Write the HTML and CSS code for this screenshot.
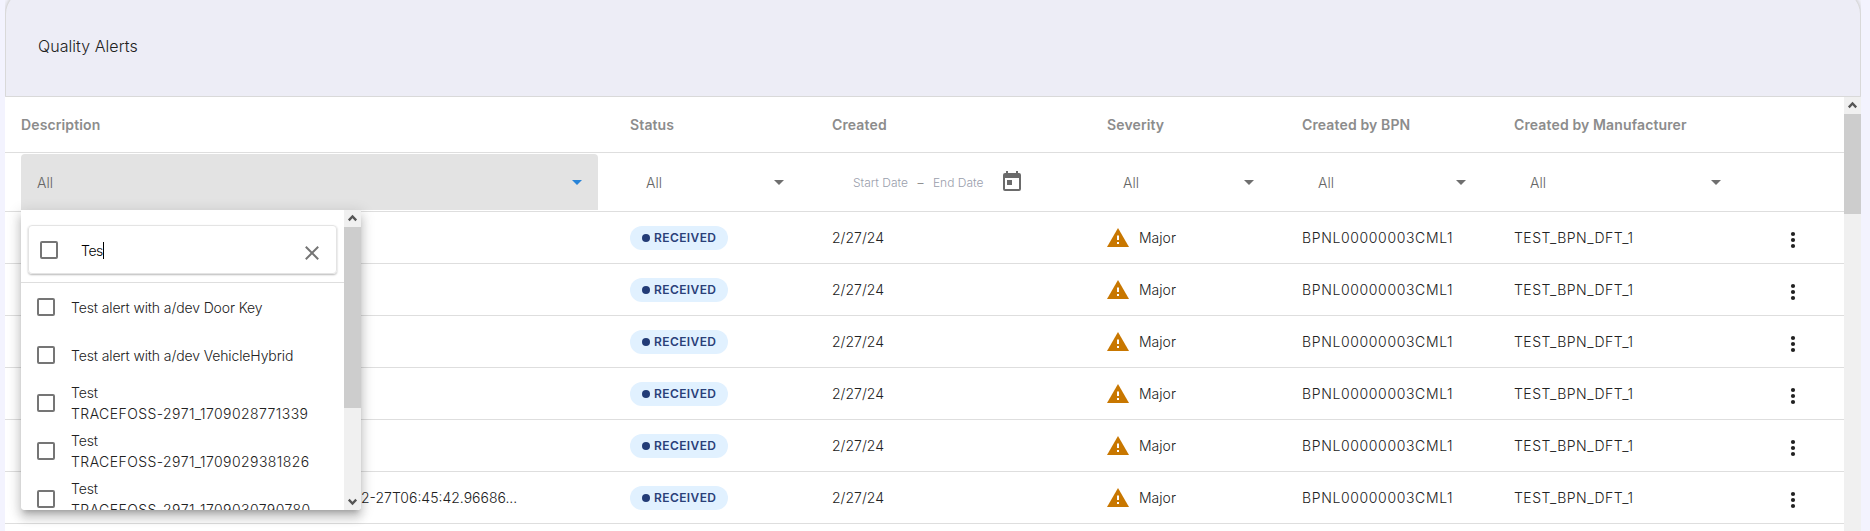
FILE: index.html
```html
<!DOCTYPE html>
<html lang="en">
<head>
<meta charset="utf-8">
<title>Quality Alerts</title>
<link rel="stylesheet" href="styles.css">
</head>
<body>
<svg width="0" height="0" class="defs">
  <symbol id="warn" viewBox="0 0 22 19"><path d="M11 0 22 19H0Z" fill="#c87700"/><path d="M10 7.5h2v4.5h-2zM10 14h2v2h-2z" fill="#fff"/></symbol>
  <symbol id="dots" viewBox="0 0 6 18"><circle cx="3" cy="3" r="2.1"/><circle cx="3" cy="9" r="2.1"/><circle cx="3" cy="15" r="2.1"/></symbol>
  <symbol id="up" viewBox="0 0 17 17"><path d="M4.8 10.4 8.5 6.5l3.7 3.9" fill="none" stroke="#555" stroke-width="2.3"/></symbol>
</svg>
<div class="page">
  <main class="card">
    <header class="card-header"><h1>Quality Alerts</h1></header>
    <div class="body">
      <div class="table">
        <div class="row head">
          <div>Description</div><div>Status</div><div>Created</div><div>Severity</div><div>Created by BPN</div><div>Created by Manufacturer</div><div></div>
        </div>
        <div class="row filters">
          <div class="anchor">
            <div class="select active"><span>All</span><i class="arrow"></i></div>
            <div class="panel">
              <div class="panel-list">
                <div class="search-wrap">
                  <div class="search">
                    <span class="box"></span><span class="query">Tes</span><span class="caret"></span>
                    <svg class="clear" width="14" height="14" viewBox="0 0 14 14"><path d="M.8.8 13.2 13.2M13.2.8.8 13.2" stroke="#757575" stroke-width="2"/></svg>
                  </div>
                </div>
                <div class="option"><span class="box"></span><span class="label">Test alert with a/dev Door Key</span></div>
                <div class="option"><span class="box"></span><span class="label">Test alert with a/dev VehicleHybrid</span></div>
                <div class="option"><span class="box"></span><span class="label">Test<br><b>TRACEFOSS-2971_1709028771339</b></span></div>
                <div class="option"><span class="box"></span><span class="label">Test<br><b>TRACEFOSS-2971_1709029381826</b></span></div>
                <div class="option"><span class="box"></span><span class="label">Test<br><b>TRACEFOSS-2971_1709030790780</b></span></div>
              </div>
              <div class="scroll"><svg class="btn"><use href="#up"/></svg><div class="thumb thumb-panel"></div><svg class="btn down"><use href="#up"/></svg></div>
            </div>
          </div>
          <div><div class="select"><span>All</span><i class="arrow"></i></div></div>
          <div><div class="dates"><span>Start Date</span><span class="dash">–</span><span>End Date</span>
            <svg width="18" height="20" viewBox="0 0 18 20"><path d="M3 0h2v2h8V0h2v2h1a2 2 0 0 1 2 2v14a2 2 0 0 1-2 2H2a2 2 0 0 1-2-2V4a2 2 0 0 1 2-2h1ZM2 7v11h14V7ZM4 9h5v5H4Z" fill="#6b6b6b" fill-rule="evenodd"/></svg></div></div>
          <div><div class="select"><span>All</span><i class="arrow"></i></div></div>
          <div><div class="select"><span>All</span><i class="arrow"></i></div></div>
          <div><div class="select"><span>All</span><i class="arrow"></i></div></div>
          <div></div>
        </div>
        <div class="row"><div></div><div><span class="chip">RECEIVED</span></div><div>2/27/24</div><div class="sev"><svg><use href="#warn"/></svg>Major</div><div class="bpn">BPNL00000003CML1</div><div class="man">TEST_BPN_DFT_1</div><div class="menu"><svg><use href="#dots"/></svg></div></div>
        <div class="row"><div></div><div><span class="chip">RECEIVED</span></div><div>2/27/24</div><div class="sev"><svg><use href="#warn"/></svg>Major</div><div class="bpn">BPNL00000003CML1</div><div class="man">TEST_BPN_DFT_1</div><div class="menu"><svg><use href="#dots"/></svg></div></div>
        <div class="row"><div></div><div><span class="chip">RECEIVED</span></div><div>2/27/24</div><div class="sev"><svg><use href="#warn"/></svg>Major</div><div class="bpn">BPNL00000003CML1</div><div class="man">TEST_BPN_DFT_1</div><div class="menu"><svg><use href="#dots"/></svg></div></div>
        <div class="row"><div></div><div><span class="chip">RECEIVED</span></div><div>2/27/24</div><div class="sev"><svg><use href="#warn"/></svg>Major</div><div class="bpn">BPNL00000003CML1</div><div class="man">TEST_BPN_DFT_1</div><div class="menu"><svg><use href="#dots"/></svg></div></div>
        <div class="row"><div></div><div><span class="chip">RECEIVED</span></div><div>2/27/24</div><div class="sev"><svg><use href="#warn"/></svg>Major</div><div class="bpn">BPNL00000003CML1</div><div class="man">TEST_BPN_DFT_1</div><div class="menu"><svg><use href="#dots"/></svg></div></div>
        <div class="row"><div class="desc">2-27T06:45:42.96686...</div><div><span class="chip">RECEIVED</span></div><div>2/27/24</div><div class="sev"><svg><use href="#warn"/></svg>Major</div><div class="bpn">BPNL00000003CML1</div><div class="man">TEST_BPN_DFT_1</div><div class="menu"><svg><use href="#dots"/></svg></div></div>
      </div>
      <div class="scroll"><svg class="btn"><use href="#up"/></svg><div class="thumb thumb-page"></div></div>
    </div>
  </main>
</div>
</body>
</html>
```
FILE: styles.css
```css
* { box-sizing: border-box; }
body {
  margin: 0;
  background: #f3f3fe;
  color: #212121;
  font: 300 14px/21px Inter, sans-serif;
}
.defs { position: absolute; }
.page { height: 531px; padding: 0 9px 0 5px; overflow: hidden; }
.card { height: 531px; display: flex; flex-direction: column; background: #f3f3fa; }
.card-header {
  height: 107px;
  flex: none;
  margin-top: -10px;
  padding: 4px 0 0 32px;
  display: flex;
  align-items: center;
  background: #ededf6;
  border: 1px solid #d9d9d9;
  border-radius: 24px 24px 0 0;
  box-shadow: 0 0 4px rgba(0, 0, 0, .18);
  clip-path: inset(0);
}
h1 { margin: 0; font-size: 16px; font-weight: 300; line-height: 24px; letter-spacing: .05px; }

.body { display: flex; flex: 1; min-height: 0; background: #fff; }
.table { flex: 1; }
.row {
  display: grid;
  grid-template-columns: 609px 202px 275px 195px 212px 255px 91px;
  height: 52px;
  border-bottom: 1px solid #dedede;
}
.row > div { display: flex; align-items: center; padding: 0 16px; white-space: nowrap; }
.row.head { height: 56px; color: #8c8c8c; font-weight: 600; letter-spacing: .13px; }
.row.filters { height: 59px; }

.anchor { position: relative; }
.select {
  flex: 1;
  height: 56px;
  padding: 0 16px;
  display: flex;
  align-items: center;
  justify-content: space-between;
  border-radius: 4px 4px 0 0;
  color: #666;
}
.select.active { background: #e3e3e3; }
.arrow { border: 5px solid transparent; border-top-color: #6f6f6f; border-bottom: 0; margin-top: 0; }
.active .arrow { border-top-color: #2884d8; }

.dates { display: flex; align-items: center; padding-left: 21px; font-size: 12px; color: #9a9eac; }
.dates .dash { width: 25px; text-align: center; color: #777; }
.dates svg { margin: -3px 0 0 20px; }

.chip {
  display: flex;
  align-items: center;
  width: 98px;
  height: 24px;
  padding-left: 12px;
  border-radius: 12px;
  background: #e1f1ff;
  color: #2a4079;
  font-size: 12px;
  font-weight: 600;
  letter-spacing: .4px;
}
.chip::before { content: ""; width: 8px; height: 8px; margin-right: 4px; border-radius: 50%; background: #233c77; }
.sev svg { width: 22px; height: 19px; margin-right: 10px; }
.bpn { letter-spacing: .64px; }
.man { letter-spacing: .47px; }
.row > .desc { padding-left: 356px; }
.row > .menu { padding: 4px 0 0 36.5px; }
.menu svg { width: 6px; height: 18px; fill: #212121; }

.panel {
  position: absolute;
  z-index: 2;
  top: 57px;
  left: 16px;
  width: 340px;
  height: 300px;
  display: flex;
  overflow: hidden;
  background: #fff;
  border-radius: 0 0 4px 4px;
}
.anchor::after {
  content: "";
  position: absolute;
  z-index: 1;
  top: 57px;
  left: 16px;
  width: 340px;
  height: 300px;
  border-radius: 0 0 4px 4px;
  box-shadow: 0 5px 5px -3px rgba(0, 0, 0, .2), 0 8px 10px 1px rgba(0, 0, 0, .14), 0 3px 14px 2px rgba(0, 0, 0, .12);
}
.panel-list { width: 323px; }
.search-wrap { height: 73px; padding: 15px 7px 0; border-bottom: 1px solid #dedede; }
.search {
  height: 49px;
  padding: 0 17px 0 11px;
  display: flex;
  align-items: center;
  border: 1px solid #e4e4e4;
  border-radius: 4px;
  box-shadow: 0 1px 2px rgba(0, 0, 0, .28);
}
.box { width: 18px; height: 18px; flex: none; border: 2px solid #757575; border-radius: 2px; }
.query { margin: 2px 0 0 23px; letter-spacing: -.4px; color: #000; }
.caret { width: 1px; height: 17px; margin-top: 2px; background: #000; }
.clear { margin: 7px 0 0 auto; }
.option { display: flex; align-items: center; height: 48px; padding-left: 16px; }
.option .label { margin: 0 0 0 16px; letter-spacing: -.12px; }
.option b { font-weight: 300; letter-spacing: .43px; }

.scroll { width: 17px; flex: none; display: flex; flex-direction: column; background: #f0f0f0; }
.btn { width: 17px; height: 17px; flex: none; }
.btn.down { margin-top: auto; transform: rotate(180deg); }
.thumb { background: #cdcdcd; }
.thumb-page { height: 100px; }
.thumb-panel { height: 181px; }
```
